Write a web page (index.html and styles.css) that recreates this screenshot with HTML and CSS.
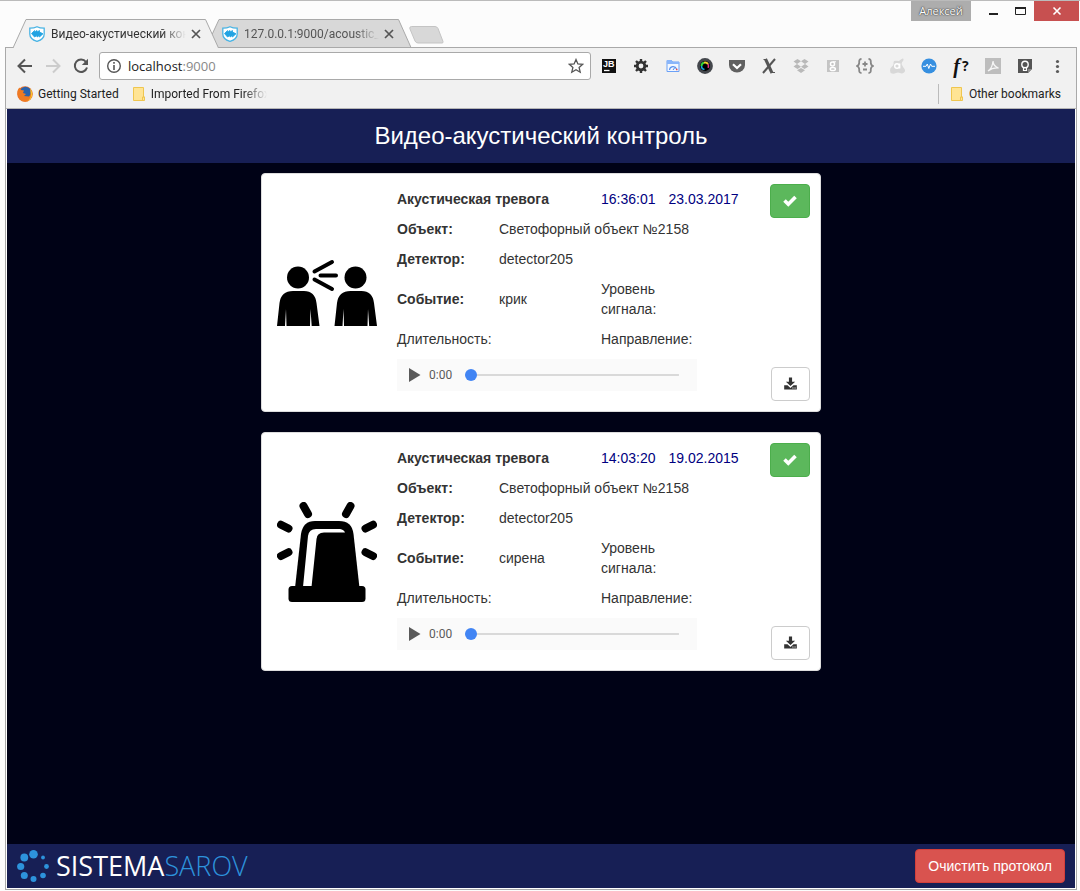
FILE: index.html
```html
<!DOCTYPE html>
<html lang="ru">
<head>
<meta charset="utf-8">
<title>Видео-акустический контроль</title>
<link rel="stylesheet" href="styles.css">
</head>
<body>
<svg class="defs" aria-hidden="true">
  <symbol id="shield" viewBox="0 0 16 16">
    <path d="M8 .7C5.800 1.900 3.200 2.200 .8 2.200V8c0 4 3.500 6.300 7.200 7.400C11.700 14.300 15.200 12 15.200 8V2.200C12.800 2.200 10.200 1.900 8 .7z" fill="#fff" stroke="#4ab4e4" stroke-width="1.300"/>
    <path d="M2.500 7.500 5.500 4.500V6L8 4.500V6l2.500-1.500V6l3.500 1.800L10.500 11V9.500L8 11V9.500L5.500 11z" fill="#22a3e2" stroke="#22a3e2" stroke-width=".8"/>
  </symbol>
  <symbol id="cross" viewBox="0 0 16 16">
    <path d="M4 4l8 8M12 4l-8 8" stroke="#555" stroke-width="1.700" fill="none"/>
  </symbol>
  <symbol id="folder" viewBox="0 0 14 16">
    <path d="M1.500 1.500h10v9.500h1v3.500h-11z" fill="#ffe494" stroke="#efc64f"/>
    <path d="M10.500 14v-3h2" fill="none" stroke="#efc64f"/>
  </symbol>
  <symbol id="check" viewBox="0 0 14 14">
    <path d="M1.500 6.500 5.300 10.300 12.500 3.100" fill="none" stroke="#fff" stroke-width="3.600"/>
  </symbol>
  <symbol id="save" viewBox="0 0 14 14">
    <path d="M5.300 0h3.400v4.500h3.300L7 9.200 2 4.500h3.300z" fill="#333"/>
    <path d="M.2 8.300h3.600L7 11.300l3.200-3h3.600v4.500H.2z" fill="#333"/>
    <path d="M9 10.800h1.200v1H9zM11.300 10.800h1.200v1h-1.200z" fill="#fff"/>
  </symbol>
  <symbol id="play" viewBox="0 0 12 14">
    <path d="M0 0v14l11.500-7z" fill="#5a5a5a"/>
  </symbol>
</svg>

<div class="window">
  <div class="titlebar">
    <div class="tabs">
      <div class="tab tab-active">
        <svg class="tab-shape" width="207" height="29"><path d="M1 29 14 .5H193.500L206.500 29" fill="#f1f1f1" stroke="#a9a9a9"/></svg>
        <svg class="favicon"><use href="#shield"/></svg>
        <span class="tab-title">Видео-акустический кон</span>
        <button class="tab-close" aria-label="Закрыть вкладку"><svg width="16" height="16"><use href="#cross"/></svg></button>
      </div>
      <div class="tab">
        <svg class="tab-shape" width="207" height="29"><path d="M1 28.500 14 .5H193.500L206 28.500z" fill="#d8d8d8" stroke="#a9a9a9"/></svg>
        <svg class="favicon"><use href="#shield"/></svg>
        <span class="tab-title">127.0.0.1:9000/acoustic_e</span>
        <button class="tab-close" aria-label="Закрыть вкладку"><svg width="16" height="16"><use href="#cross"/></svg></button>
      </div>
      <button class="new-tab" aria-label="Новая вкладка"><svg width="35" height="18"><path d="M2.500.5H26q2 0 3 2l5 13q.5 1.500-1 1.500H9q-2 0-3-2L.8 2.500Q.5.5 2.500.5z" fill="#d8d8d8" stroke="#c4c4c4"/></svg></button>
    </div>
    <div class="controls">
      <button class="profile">Алексей</button>
      <button class="ctl" aria-label="Свернуть"><svg width="9" height="10"><path d="M0 8h9" stroke="#222" stroke-width="2"/></svg></button>
      <button class="ctl" aria-label="Развернуть"><svg width="11" height="10"><path d="M.5 1.500h10v7H.5z" fill="none" stroke="#222"/><path d="M0 2h11" stroke="#222" stroke-width="2"/></svg></button>
      <button class="ctl ctl-close" aria-label="Закрыть"><svg width="10" height="10"><path d="M1.500 1.500l7 7M8.500 1.500l-7 7" stroke="#fff" stroke-width="1.600"/></svg></button>
    </div>
  </div>

  <div class="frame">
    <div class="chrome">
      <div class="toolbar">
        <button class="nav" aria-label="Назад"><svg width="16" height="16"><path d="M15 8H2.500M8 1.500 1.500 8 8 14.500" fill="none" stroke="#555" stroke-width="2"/></svg></button>
        <button class="nav" aria-label="Вперёд"><svg width="16" height="16"><path d="M1 8h12.500M8 1.500 14.500 8 8 14.500" fill="none" stroke="#ccc" stroke-width="2"/></svg></button>
        <button class="nav" aria-label="Обновить"><svg width="16" height="16"><path d="M13 4A6.200 6.200 0 1 0 14 9.500" fill="none" stroke="#555" stroke-width="2"/><path d="M15 .8V7H8.800z" fill="#555"/></svg></button>
        <div class="address">
          <svg width="16" height="16"><circle cx="8" cy="8" r="6.300" fill="none" stroke="#555" stroke-width="1.400"/><path d="M8 7v5M8 4v1.700" stroke="#555" stroke-width="1.600"/></svg>
          <a class="url" href="#">localhost<span class="port">:9000</span></a>
          <button class="star" aria-label="Добавить в закладки"><svg width="16" height="16"><path d="M8 1.500l1.900 4.400 4.800.4-3.600 3.200 1.100 4.700L8 11.700l-4.200 2.500 1.100-4.700L1.300 6.300l4.800-.4z" fill="none" stroke="#555" stroke-width="1.300"/></svg></button>
        </div>
        <div class="extensions">
          <button class="ext" aria-label="JetBrains"><svg width="16" height="16"><path d="M1 1h14v14H1z" fill="#111"/><text class="jb" x="2" y="9">JB</text><path d="M3 12.500h5.500" stroke="#fff" stroke-width="1.300"/></svg></button>
          <button class="ext" aria-label="Настройки"><svg width="16" height="16"><circle cx="8" cy="8" r="3.800" fill="none" stroke="#333" stroke-width="2.800"/><path d="M8 1v2.500M8 12.500V15M1 8h2.500M12.500 8H15M3 3l1.800 1.800M11.200 11.200 13 13M13 3l-1.800 1.800M4.800 11.200 3 13" stroke="#333" stroke-width="2.400"/></svg></button>
          <button class="ext" aria-label="Монитор"><svg width="16" height="16"><path d="M2 2.500h4.500l1 1.500H14v9.500H2z" fill="#f3f8ff" stroke="#6ba1f7"/><path d="M2 2h5v2.500H2zM2 4h12v2H2z" fill="#8ab6fa"/><path d="M4.500 12a3.600 3.600 0 0 1 7-1" fill="none" stroke="#5c94ef" stroke-width="1.200"/><path d="M8 12l1.800-2.500" stroke="#4d87e4"/><path d="M11 11.500h1.500" stroke="#e44" stroke-width="1.300"/></svg></button>
          <button class="ext" aria-label="Палитра"><svg width="16" height="16"><circle cx="8" cy="8" r="7.900" fill="#44474c"/><circle cx="8" cy="8" r="5" fill="#000"/><path d="M4.500 8A3.500 3.500 0 0 1 7 4.700" fill="none" stroke="#35d53b" stroke-width="2"/><path d="M7 4.700a3.500 3.500 0 0 1 4 1.500" fill="none" stroke="#f1d52b" stroke-width="2"/><path d="M11 6.200a3.500 3.500 0 0 1 0 3.600" fill="none" stroke="#e8338b" stroke-width="1.500"/><path d="M4.500 8a3.500 3.500 0 0 0 3 3.500" fill="none" stroke="#16a8dd" stroke-width="1.500"/></svg></button>
          <button class="ext" aria-label="Pocket"><svg width="16" height="16"><path d="M0 2h16v5a8 7.500 0 0 1-16 0z" fill="#606060"/><path d="M4 6.300 8 10l4-3.700" fill="none" stroke="#fff" stroke-width="2.200"/></svg></button>
          <button class="ext" aria-label="XPath"><svg width="16" height="16"><path d="M4.500 1 11 15" stroke="#555" stroke-width="3"/><path d="M14 1 2 15" stroke="#555" stroke-width="2"/><path d="M2.500 1.500H6M10 14.500h4" stroke="#555"/></svg></button>
          <button class="ext" aria-label="Dropbox"><svg width="16" height="16"><path d="M4.500 1 8 3.300 4 6 .5 3.600zM11.500 1l4 2.600L12 6 8 3.300zM.5 8.500 4 6l4 2.700L4.500 11zM8 8.700 12 6l3.500 2.500-4 2.500zM8 10l4 2.300-4 2.700-4-2.700z" fill="#b9b9b9"/></svg></button>
          <button class="ext" aria-label="Google"><svg width="16" height="16"><path d="M2 2h12v12H2z" fill="#c4c4c4"/><circle cx="7.500" cy="6" r="2" fill="none" stroke="#fff" stroke-width="1.500"/><ellipse cx="7.800" cy="11" rx="2.600" ry="1.600" fill="none" stroke="#fff" stroke-width="1.500"/><path d="M8 3.800h3" stroke="#fff"/></svg></button>
          <button class="ext" aria-label="JSON"><svg width="18" height="16"><path d="M5.500 1Q3 1 3.200 4T1 8q2.400 1 2.200 4t2.300 3M12.500 1Q15 1 14.800 4T17 8q-2.400 1-2.200 4t-2.300 3M6.500 6h5M9 3.500v5M7 11.500h4" fill="none" stroke="#888" stroke-width="1.800"/></svg></button>
          <button class="ext" aria-label="Avast"><svg width="16" height="16"><path d="M10 3q3-3 4-2.500t0 2.500q-2 2-1 4t2.500 4-.5 3.500-4 .5-4 0-4 .5-2-3 2-4 1.500-4T10 3z" fill="#d8d8d8"/><circle cx="8" cy="8" r="2.300" fill="none" stroke="#fff" stroke-width="1.400"/><path d="M10.700 5.500V10.500" stroke="#fff" stroke-width="1.400"/></svg></button>
          <button class="ext" aria-label="Пульс"><svg width="16" height="16"><circle cx="8" cy="8" r="7.600" fill="#368fe0"/><path d="M2 8.300h3L6.300 6l1.500 4.500L9.500 6l1.200 2.300H14" fill="none" stroke="#fff" stroke-width="1"/></svg></button>
          <button class="ext whatfont" aria-label="WhatFont"><i>f</i><b>?</b></button>
          <button class="ext" aria-label="PDF"><svg width="16" height="16"><path d="M0 0h16v16H0z" fill="#bdbdbd"/><path d="M3 13q4.500-3 5-10 0 5 5.500 7-6-.5-10.500 3z" fill="none" stroke="#f5f5f5" stroke-width="1.300"/></svg></button>
          <button class="ext" aria-label="Keep"><svg width="16" height="16"><path d="M1 1h14v10l-4 4H1z" fill="#555"/><path d="M11 15v-4h4z" fill="#888"/><circle cx="8" cy="6.500" r="3.200" fill="none" stroke="#fff" stroke-width="1.400"/><path d="M6.500 9v3.500h3V9" fill="none" stroke="#fff" stroke-width="1.200"/></svg></button>
          <button class="ext" aria-label="Меню"><svg width="16" height="16"><circle cx="8.500" cy="3.500" r="1.600" fill="#5a5a5a"/><circle cx="8.500" cy="8.500" r="1.600" fill="#5a5a5a"/><circle cx="8.500" cy="13.500" r="1.600" fill="#5a5a5a"/></svg></button>
        </div>
      </div>
      <div class="bookmarks">
        <a class="bookmark" href="#"><svg width="16" height="16"><circle cx="8" cy="8" r="7.800" fill="#e8702a"/><circle cx="8.500" cy="6.500" r="5.800" fill="#2a63ac"/><path d="M.5 5Q1 2.500 2.500 1.500L4 4l3 .5L6 7l3 1-2 2 5 .5q2-1.500 1.500-6L15 6q1 4-2 7.500T5 15Q0 12 .5 5z" fill="#ef7a22"/><path d="M13 2.500Q16 6 15 10t-5 5.500q4-3 4-7z" fill="#fbc62d"/></svg>Getting Started</a>
        <a class="bookmark bookmark-folder" href="#"><svg width="14" height="16"><use href="#folder"/></svg><span class="fade">Imported From Firefox</span></a>
        <a class="bookmark bookmark-folder bookmark-other" href="#"><svg width="14" height="16"><use href="#folder"/></svg>Other bookmarks</a>
      </div>
    </div>

    <div class="page">
      <header class="page-header"><h1>Видео-акустический контроль</h1></header>
      <main class="alarms">
        <article class="card">
          <svg class="event-icon" viewBox="0 0 100 100">
            <g id="person"><circle cx="21" cy="34.500" r="11"/><path d="M0 83 2.500 60Q4 48 16 48h11q11 0 12.500 12L42.500 83h-7.800L33.500 66 33 83H9.500L9 66 8 83z"/></g>
            <use href="#person" x="57.500"/>
            <path d="M37.500 28.500 55 19M43.500 32.500H59M37.500 36.500 55 46" stroke="#000" stroke-width="4" stroke-linecap="round"/>
          </svg>
          <div class="details">
            <table class="facts">
              <tr><th colspan="2">Акустическая тревога</th><td colspan="2" class="when"><time>16:36:01</time><time>23.03.2017</time></td></tr>
              <tr><th>Объект:</th><td colspan="3">Светофорный объект №2158</td></tr>
              <tr><th>Детектор:</th><td colspan="3">detector205</td></tr>
              <tr><th>Событие:</th><td>крик</td><td>Уровень сигнала:</td><td></td></tr>
              <tr><td>Длительность:</td><td></td><td>Направление:</td><td></td></tr>
            </table>
            <div class="player">
              <button class="play" aria-label="Воспроизвести"><svg width="12" height="14"><use href="#play"/></svg></button>
              <span class="elapsed">0:00</span>
              <input class="seek" type="range" min="0" max="100" value="0" aria-label="Позиция">
            </div>
          </div>
          <div class="actions">
            <button class="btn btn-success" aria-label="Подтвердить"><svg width="14" height="14"><use href="#check"/></svg></button>
            <button class="btn btn-default" aria-label="Скачать"><svg width="13" height="14"><use href="#save"/></svg></button>
          </div>
        </article>

        <article class="card">
          <svg class="event-icon" viewBox="0 0 100 100">
            <path d="M26.500 4 31 12M73.500 4 69 12M4 22.700 11.500 26.500M96 22.700 88.500 26.500M4 54 11.500 50.200M96 54 88.500 50.200" stroke="#000" stroke-width="8" stroke-linecap="round"/>
            <path d="M18 86 24 32Q26 19 38 19H62Q75 19 76.500 32L82.500 86z"/>
            <path d="M26 85 31 34Q32 27 39 27H63Q67 27.500 68 30.500H47Q40 30.500 39.500 37L34.500 85z" fill="#fff"/>
            <rect x="11.500" y="84" width="77" height="16" rx="3.500"/>
          </svg>
          <div class="details">
            <table class="facts">
              <tr><th colspan="2">Акустическая тревога</th><td colspan="2" class="when"><time>14:03:20</time><time>19.02.2015</time></td></tr>
              <tr><th>Объект:</th><td colspan="3">Светофорный объект №2158</td></tr>
              <tr><th>Детектор:</th><td colspan="3">detector205</td></tr>
              <tr><th>Событие:</th><td>сирена</td><td>Уровень сигнала:</td><td></td></tr>
              <tr><td>Длительность:</td><td></td><td>Направление:</td><td></td></tr>
            </table>
            <div class="player">
              <button class="play" aria-label="Воспроизвести"><svg width="12" height="14"><use href="#play"/></svg></button>
              <span class="elapsed">0:00</span>
              <input class="seek" type="range" min="0" max="100" value="0" aria-label="Позиция">
            </div>
          </div>
          <div class="actions">
            <button class="btn btn-success" aria-label="Подтвердить"><svg width="14" height="14"><use href="#check"/></svg></button>
            <button class="btn btn-default" aria-label="Скачать"><svg width="13" height="14"><use href="#save"/></svg></button>
          </div>
        </article>
      </main>
      <footer class="page-footer">
        <a class="logo" href="#">
          <svg width="32" height="32" fill="#2d93dc"><circle cx="16.500" cy="4.300" r="4.300"/><circle cx="7.300" cy="7.500" r="3.900"/><circle cx="3.700" cy="16.500" r="3.600"/><circle cx="7.300" cy="25.500" r="3.500"/><circle cx="16.500" cy="29" r="3"/><circle cx="26" cy="25.500" r="2.800"/><circle cx="29.500" cy="16.500" r="2.400"/><circle cx="26" cy="7.500" r="1.900"/></svg>
          <span class="wordmark">SISTEMA<span class="wordmark-light">SAROV</span></span>
        </a>
        <button class="btn btn-danger">Очистить протокол</button>
      </footer>
    </div>
  </div>
</div>
</body>
</html>
```

FILE: styles.css
```css
* { box-sizing: border-box; }

body {
  margin: 0;
  font-family: "Liberation Sans", Arial, sans-serif;
  font-size: 14px;
  line-height: 20px;
  color: #333;
}

button {
  margin: 0;
  padding: 0;
  border: 0;
  background: none;
  font: inherit;
  color: inherit;
}

svg { display: block; flex: none; }
a { color: inherit; text-decoration: none; }
.defs { position: absolute; width: 0; height: 0; }

.window {
  display: flex;
  flex-direction: column;
  min-height: 100vh;
  border-top: 1px solid #bbb;
  background: #fcfcfc;
  font-family: Roboto, "Open Sans", sans-serif;
}

/* Title bar */
.titlebar {
  display: flex;
  justify-content: space-between;
  height: 46px;
  padding: 0 1px 0 12px;
}

.tabs { display: flex; align-items: flex-end; }

.tab {
  position: relative;
  display: flex;
  align-items: center;
  width: 207px;
  height: 29px;
  margin: 0 0 -1px -14px;
  padding: 0 15px 0 17px;
  font-size: 12px;
  color: #555;
}

.tab-active { z-index: 1; margin-left: 0; color: #333; }
.tab-shape { position: absolute; top: 0; left: 0; }
.favicon { position: relative; width: 16px; height: 16px; }

.tab-title {
  position: relative;
  flex: 1;
  min-width: 0;
  margin: 0 2px 0 6px;
  overflow: hidden;
  white-space: nowrap;
}

.tab-title, .fade {
  -webkit-mask-image: linear-gradient(to left, transparent, #000 24px);
  mask-image: linear-gradient(to left, transparent, #000 24px);
}

.tab-close { position: relative; }
.new-tab { margin: 0 0 3px -3px; }

.controls { display: flex; align-items: flex-start; }

.profile {
  width: 60px;
  height: 20px;
  margin-right: 9px;
  background: #adadad;
  color: #fff;
  font-family: "Open Sans", sans-serif;
  font-size: 11px;
  text-shadow: 0 0 1px #222, 0 0 2px #444;
}

.ctl {
  display: flex;
  align-items: center;
  justify-content: center;
  width: 27px;
  height: 20px;
}

.ctl-close { width: 45px; background: #c75050; }

/* Browser frame */
.frame {
  flex: 1;
  display: flex;
  flex-direction: column;
  margin: 0 3px 1px 5px;
  border: 1px solid #a9a9a9;
}

.chrome { border-bottom: 1px solid #b5b5b5; background: #f1f1f1; }

.toolbar {
  display: flex;
  align-items: center;
  height: 36px;
  padding: 0 3px 0 5px;
}

.nav {
  display: flex;
  align-items: center;
  justify-content: center;
  width: 28px;
  height: 28px;
}

.address {
  flex: 1;
  display: flex;
  align-items: center;
  height: 28px;
  margin: 0 2px 0 4px;
  padding: 0 6px;
  border: 1px solid #a9a9a9;
  border-radius: 3px;
  background: #fff;
}

.url {
  flex: 1;
  margin-left: 6px;
  font-family: "Open Sans", sans-serif;
  font-size: 13px;
  color: #222;
}

.port { color: #888; }

.extensions { display: flex; }

.ext {
  display: flex;
  align-items: center;
  justify-content: center;
  width: 32px;
  height: 28px;
}

.jb { font: bold 9px "Liberation Sans", sans-serif; fill: #fff; }
.whatfont { gap: 2px; color: #111; }
.whatfont i { font-family: "Liberation Serif", serif; font-size: 20px; font-weight: bold; }
.whatfont b { font-family: "Open Sans", sans-serif; font-size: 14px; }

.bookmarks {
  display: flex;
  align-items: center;
  height: 24px;
  padding: 0 15px 4px 11px;
  font-size: 12px;
  color: #222;
}

.bookmark { display: flex; align-items: center; gap: 5px; }
.bookmark-folder { margin-left: 13px; }
.fade { width: 116px; overflow: hidden; white-space: nowrap; }
.bookmark-other { margin-left: auto; padding-left: 11px; border-left: 1px solid #bbb; }

/* Monitoring page */
.page {
  flex: 1;
  display: flex;
  flex-direction: column;
  border: solid #fff;
  border-width: 0 1px 1px;
  background: #000216;
  font-family: "Liberation Sans", Arial, sans-serif;
}

.page-header { padding: 12px; background: #171f55; color: #fff; text-align: center; }
.page-header h1 { margin: 0; font-size: 24px; font-weight: normal; line-height: 30px; }

.alarms {
  flex: 1;
  display: flex;
  flex-direction: column;
  align-items: center;
  gap: 20px;
  padding: 10px;
}

.card {
  display: flex;
  width: 100%;
  max-width: 560px;
  padding: 10px;
  border: 1px solid #ddd;
  border-radius: 4px;
  background: #fff;
}

.event-icon { align-self: center; width: 100px; height: 100px; margin: 0 15px 0 5px; }
.details { flex: 1; }
.facts { width: 100%; border-collapse: collapse; table-layout: fixed; }
.facts th, .facts td { padding: 5px; text-align: left; }
.facts tr > :first-child { white-space: nowrap; }
.when { color: #000080; }
.when time + time { margin-left: 13px; }

.player {
  display: flex;
  align-items: center;
  width: 300px;
  height: 32px;
  margin: 5px 5px 10px;
  padding: 0 18px 0 12px;
  background: #fafafa;
}

.elapsed { margin: 0 13px 0 8px; font-family: Roboto, sans-serif; font-size: 12px; color: #5a5a5a; }

.seek {
  flex: 1;
  min-width: 0;
  height: 12px;
  margin: 0;
  -webkit-appearance: none;
  appearance: none;
  background: linear-gradient(#d9d9d9, #d9d9d9) center / 100% 2px no-repeat;
}

.seek::-webkit-slider-thumb {
  -webkit-appearance: none;
  width: 12px;
  height: 12px;
  border-radius: 50%;
  background: #4285f4;
}

.actions {
  display: flex;
  flex-direction: column;
  align-items: flex-end;
  justify-content: space-between;
  width: 10px;
}

.btn {
  padding: 6px 12px;
  border: 1px solid;
  border-radius: 4px;
  font-size: 14px;
  line-height: 20px;
}

.btn svg { margin: 3px 0; }
.btn-success { border-color: #4cae4c; background: #5cb85c; }
.btn-default { border-color: #ccc; background: #fff; }
.btn-danger { border-color: #d43f3a; background: #d9534f; color: #fff; }

.page-footer {
  display: flex;
  align-items: center;
  justify-content: space-between;
  padding: 5px 10px;
  background: #171f55;
}

.logo { display: flex; align-items: center; gap: 7px; }
.wordmark { font-family: "Open Sans", sans-serif; font-size: 27px; line-height: 32px; color: #fff; }
.wordmark-light { font-weight: 300; color: #2d93dc; }
```
